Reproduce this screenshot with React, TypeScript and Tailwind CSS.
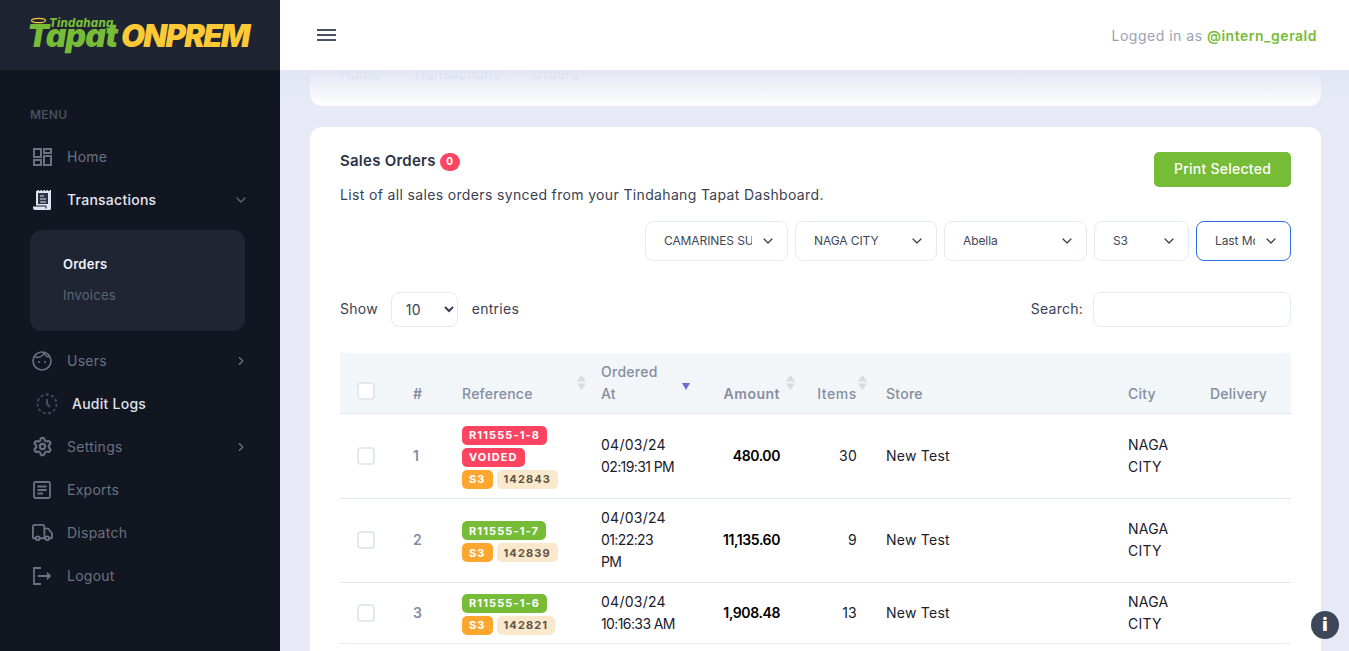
import { ChevronDown, ChevronRight, Settings, Truck } from "lucide-react";
import type { ReactNode } from "react";

const HomeIcon = () => (
  <svg width="20" height="20" viewBox="0 0 20 20" fill="none" stroke="currentColor" strokeWidth="2">
    <rect x="2" y="2" width="7" height="8" />
    <rect x="12" y="2" width="7" height="4" />
    <rect x="2" y="13" width="7" height="5" />
    <rect x="12" y="9" width="7" height="9" />
  </svg>
);

const ReceiptIcon = () => (
  <svg width="18" height="20" viewBox="0 0 18 20">
    <path d="M3 0h15v17a2 2 0 0 1-2 3H2a2 2 0 0 1-2-2v-2h3z" fill="#dfe4f2" />
    <path d="M3 .5h15" stroke="#111621" strokeWidth="1" strokeDasharray="1.5 1.5" />
    <rect x="5" y="3" width="10" height="11" fill="#2f3543" />
    <path d="M7 6h4M7 9h6M7 12h6" stroke="#dfe4f2" strokeWidth="1.2" />
    <path d="M0 16h13v2.5" fill="none" stroke="#111621" strokeWidth="1" />
  </svg>
);

const FaceIcon = () => (
  <svg width="20" height="20" viewBox="0 0 20 20" fill="none" stroke="currentColor" strokeWidth="1.6">
    <circle cx="10" cy="10" r="9" />
    <path d="M3 6c4 1 7 0 9-4 1 2 3 4 5 4" />
    <circle cx="7" cy="11" r="1" fill="currentColor" stroke="none" />
    <circle cx="13" cy="11" r="1" fill="currentColor" stroke="none" />
  </svg>
);

const AuditIcon = () => (
  <svg width="22" height="22" viewBox="0 0 22 22" fill="none" stroke="#454c5e" strokeWidth="1.8">
    <circle cx="11" cy="11" r="9.5" strokeDasharray="3 2.4" />
    <path d="M11 6v5l3 3" strokeWidth="2" />
  </svg>
);

const ExportIcon = () => (
  <svg width="18" height="18" viewBox="0 0 18 18" fill="none" stroke="currentColor" strokeWidth="1.8">
    <rect x="1" y="1" width="16" height="16" rx="1.5" />
    <path d="M4.5 5.5h9M4.5 9h9M4.5 12.5h5.5" />
  </svg>
);

const LogoutIcon = () => (
  <svg width="20" height="20" viewBox="0 0 20 20" fill="none" stroke="currentColor" strokeWidth="1.8">
    <path d="M9 2H2v16h7" />
    <path d="M6 10h12M15 7l3 3-3 3" />
  </svg>
);

function NavItem(props: { icon: ReactNode; label: string; arrow?: "down" | "right"; active?: boolean }) {
  return (
    <div className={`flex h-[43px] items-center pl-[30px] pr-[32px] text-[14px] ${props.active ? "font-medium text-[#e4e8f1]" : "text-[#6b7180]"}`}>
      <span className="flex w-[24px] justify-center">{props.icon}</span>
      <span className="ml-[13px] flex-1">{props.label}</span>
      {props.arrow === "down" && <ChevronDown size={16} className="-mr-[1px] text-[#5f6675]" />}
      {props.arrow === "right" && <ChevronRight size={14} className="text-[#6b7180]" />}
    </div>
  );
}

function Sidebar() {
  return (
    <aside className="flex w-[280px] shrink-0 flex-col bg-[#111621]">
      <div className="relative h-[70px] bg-[#1e2432]">
        <svg className="absolute left-[30px] top-[17px]" width="17" height="7" viewBox="0 0 17 7" fill="none">
          <ellipse cx="8.5" cy="3.5" rx="7" ry="2.2" stroke="#f5c93b" strokeWidth="1.2" />
        </svg>
        <span className="absolute left-[49px] top-[15px] text-[11.5px] font-extrabold italic leading-[16px] text-[#77bc37]">Tindahang</span>
        <span className="absolute left-[27px] top-[17px] text-[32px] font-black italic leading-[38px] tracking-[-0.8px] text-[#77bc37]">Tapat</span>
        <span className="absolute left-[121px] top-[18px] text-[31px] font-black italic leading-[36px] tracking-[-1.7px] text-[#fdc936]">ONPREM</span>
      </div>
      <div className="pl-[30px] pt-[37px] text-[12px] font-semibold leading-[16px] text-[#484e5c]">MENU</div>
      <div className="mt-[12px]">
        <NavItem icon={<HomeIcon />} label="Home" />
        <NavItem icon={<ReceiptIcon />} label="Transactions" arrow="down" active />
        <div className="ml-[30px] mr-[35px] mt-[9px] mb-[8px] h-[101px] rounded-xl bg-[#1f2533] pl-[33px] pt-[23px] text-[13px]">
          <div className="font-semibold leading-[22px] text-[#f1f3f8]">Orders</div>
          <div className="mt-[9px] leading-[22px] text-[#5d6474]">Invoices</div>
        </div>
        <NavItem icon={<FaceIcon />} label="Users" arrow="right" />
        <div className="flex h-[43px] items-center pl-[36px] text-[14px] font-medium text-[#dfe3ec]">
          <span className="flex w-[22px] justify-center"><AuditIcon /></span>
          <span className="ml-[14px]">Audit Logs</span>
        </div>
        <NavItem icon={<Settings size={21} strokeWidth={2.4} />} label="Settings" arrow="right" />
        <NavItem icon={<ExportIcon />} label="Exports" />
        <NavItem icon={<Truck size={23} strokeWidth={1.9} />} label="Dispatch" />
        <NavItem icon={<LogoutIcon />} label="Logout" />
      </div>
    </aside>
  );
}

function Filter(props: { value: string; width: string; focused?: boolean }) {
  return (
    <div className={`relative ${props.width}`}>
      <select
        defaultValue={props.value}
        className={`h-[40px] w-full appearance-none rounded-lg border bg-white pl-[18px] pr-[35px] text-[12px] tracking-[-0.1px] text-[#3f4657] ${props.focused ? "border-[#2f6fe4]" : "border-[#e5e9f2]"}`}
      >
        <option>{props.value}</option>
      </select>
      <ChevronDown size={16} strokeWidth={1.8} className="pointer-events-none absolute right-[12px] top-[12px] text-[#333a4a]" />
    </div>
  );
}

function SortArrows(props: { className: string }) {
  return (
    <svg className={`absolute top-[22px] ${props.className}`} width="9" height="15" viewBox="0 0 9 15" fill="#d8dbe2">
      <path d="M4.5 0 9 6.5H0zM4.5 15 0 8.5h9z" />
    </svg>
  );
}

function Badge(props: { children: string; color: string }) {
  return (
    <span className={`flex h-[19px] items-center rounded-[5px] px-[7px] text-[11px] font-bold tracking-[1.1px] ${props.color}`}>
      {props.children}
    </span>
  );
}

const rows = [
  { no: 1, ref: "R11555-1-8", voided: true, code: "142843", date: ["04/03/24", "02:19:31 PM"], amount: "480.00", items: 30, height: "h-[85px]" },
  { no: 2, ref: "R11555-1-7", voided: false, code: "142839", date: ["04/03/24", "01:22:23", "PM"], amount: "11,135.60", items: 9, height: "h-[84px]" },
  { no: 3, ref: "R11555-1-6", voided: false, code: "142821", date: ["04/03/24", "10:16:33 AM"], amount: "1,908.48", items: 13, height: "h-[61px]" },
];

function OrdersTable() {
  return (
    <table className="mt-[26px] w-[951px] table-fixed border-collapse text-[14px] leading-[22px]">
      <colgroup>
        <col className="w-[56px]" />
        <col className="w-[49px]" />
        <col className="w-[139px]" />
        <col className="w-[116px]" />
        <col className="w-[97px]" />
        <col className="w-[77px]" />
        <col className="w-[237px]" />
        <col className="w-[82px]" />
        <col className="w-[98px]" />
      </colgroup>
      <thead>
        <tr className="h-[60px] border-b border-[#e3e7ee] bg-[#f3f6f9] text-left align-bottom font-medium text-[#858da0]">
          <th className="pb-[8px] pl-[17px]">
            <span className="mb-[5px] block h-[18px] w-[18px] rounded-[4px] border-2 border-[#e3e7ee] bg-white" />
          </th>
          <th className="pb-[8px] pl-[17px] font-semibold">#</th>
          <th className="relative pb-[8px] pl-[17px] font-medium">
            Reference
            <SortArrows className="right-[-2px]" />
          </th>
          <th className="relative pb-[8px] pl-[17px] font-medium">
            Ordered
            <br />
            At
            <svg className="absolute right-[10px] top-[30px]" width="8" height="7" viewBox="0 0 8 7" fill="#6a6fd6">
              <path d="M0 0h8L4 7z" />
            </svg>
          </th>
          <th className="relative pb-[8px] pr-[17px] text-right font-semibold tracking-[0.5px]">
            Amount
            <SortArrows className="right-[2px]" />
          </th>
          <th className="relative pb-[8px] pr-[17px] text-right font-medium tracking-[0.6px]">
            Items
            <SortArrows className="right-[7px]" />
          </th>
          <th className="pb-[8px] pl-[12px] font-medium">Store</th>
          <th className="pb-[8px] pl-[17px] font-medium">City</th>
          <th className="pb-[8px] pl-[17px] font-medium">Delivery</th>
        </tr>
      </thead>
      <tbody className="text-[#1a202c]">
        {rows.map((row) => (
          <tr key={row.no} className={`${row.height} border-b border-[#e3e7ee]`}>
            <td className="pl-[17px]">
              <span className="block h-[18px] w-[18px] rounded-[4px] border-2 border-[#e3e7ee] bg-white" />
            </td>
            <td className="pl-[17px] font-semibold text-[#858da0]">{row.no}</td>
            <td className="pl-[17px] pt-[3px]">
              <div className="flex flex-col items-start gap-[3px]">
                <Badge color={row.voided ? "bg-[#fe4460] text-white" : "bg-[#77bc37] text-white"}>{row.ref}</Badge>
                {row.voided && <Badge color="bg-[#fe4460] text-white">VOIDED</Badge>}
                <div className="flex gap-[4px]">
                  <Badge color="bg-[#ffa62e] text-white">S3</Badge>
                  <Badge color="bg-[#fae8cd] text-[#5f5342]">{row.code}</Badge>
                </div>
              </div>
            </td>
            <td className="pl-[17px]">
              {row.date.map((line, i) => (
                <div key={line} className={i === 0 ? "" : "tracking-[-0.6px]"}>{line}</div>
              ))}
            </td>
            <td className="pr-[17px] text-right font-semibold tracking-[-0.4px] text-black">{row.amount}</td>
            <td className="pr-[17px] text-right">{row.items}</td>
            <td className="pl-[12px]">New Test</td>
            <td className="pl-[17px]">
              NAGA
              <br />
              CITY
            </td>
            <td />
          </tr>
        ))}
      </tbody>
    </table>
  );
}

export default function App() {
  return (
    <div className="flex h-screen w-full overflow-hidden font-['Inter',sans-serif] tracking-[0.25px]">
      <Sidebar />
      <div className="relative flex min-w-0 flex-1 flex-col">
        <header className="z-10 flex h-[70px] shrink-0 items-center justify-between bg-white pl-[37px] pr-[32px]">
          <svg width="19" height="14" viewBox="0 0 19 14" fill="none" stroke="#4a5160" strokeWidth="2">
            <path d="M0 2h19M0 7h19M0 12h19" />
          </svg>
          <div className="text-[14px] tracking-[0.5px] text-[#9aa2b1]">
            Logged in as <span className="font-semibold text-[#77bc37]">@intern_gerald</span>
          </div>
        </header>

        <main className="relative flex-1 overflow-hidden bg-[#e7eaf6] pl-[30px] pr-[28px]">
          <div className="absolute inset-x-0 top-0 h-[36px] bg-gradient-to-b from-[#e2e6f3] to-transparent" />
          <div className="h-[36px] overflow-hidden rounded-b-xl bg-white pl-[30px] text-[14px] leading-[8px] text-[#c3c8d6]">
            <span className="mr-[32px]">Home</span>
            <span className="mr-[32px]">Transactions</span>
            <span>Orders</span>
          </div>

          <section className="mt-[21px] rounded-t-xl bg-white px-[30px] pt-[25px] pb-[40px]">
            <div className="flex h-[69px] items-start justify-between">
              <div>
                <div className="flex h-[19px] items-center text-[15px] font-semibold text-[#2b3244]">
                  Sales Orders
                  <span className="ml-[4px] flex h-[18px] w-[20px] items-center justify-center rounded-full bg-[#fe4460] text-[10px] font-bold text-white">0</span>
                </div>
                <p className="mt-[14px] text-[14px] leading-[20px] tracking-[0.35px] text-[#3a4152]">
                  List of all sales orders synced from your Tindahang Tapat Dashboard.
                </p>
              </div>
              <button className="h-[35px] w-[137px] rounded-[5px] bg-[#77bc37] pb-[2px] text-[14px] font-medium text-white">Print Selected</button>
            </div>

            <div className="flex justify-end gap-[7px]">
              <Filter value="CAMARINES SUR" width="w-[143px]" />
              <Filter value="NAGA CITY" width="w-[142px]" />
              <Filter value="Abella" width="w-[143px]" />
              <Filter value="S3" width="w-[95px]" />
              <Filter value="Last Month" width="w-[95px]" focused />
            </div>

            <div className="mt-[31px] flex h-[35px] items-center justify-between text-[14px] text-[#3a4152]">
              <div className="flex items-center">
                <span className="pb-[2px]">Show</span>
                <select defaultValue="10" className="ml-[13px] h-[35px] w-[67px] rounded-lg border border-[#e5e9f2] bg-white pl-[10px] text-[14px] text-[#3a4152]">
                  <option>10</option>
                </select>
                <span className="ml-[14px] pb-[2px]">entries</span>
              </div>
              <label className="flex items-center">
                <span className="pb-[2px]">Search:</span>
                <input className="ml-[10px] h-[35px] w-[198px] rounded-lg border border-[#e5e9f2] bg-white" />
              </label>
            </div>

            <OrdersTable />
          </section>
        </main>

        <button className="absolute bottom-[12px] right-[10px] z-20 flex h-[28px] w-[28px] items-center justify-center rounded-full bg-[#3d4759] text-white">
          <span className="text-[18px] font-black leading-none">i</span>
        </button>
      </div>
    </div>
  );
}
